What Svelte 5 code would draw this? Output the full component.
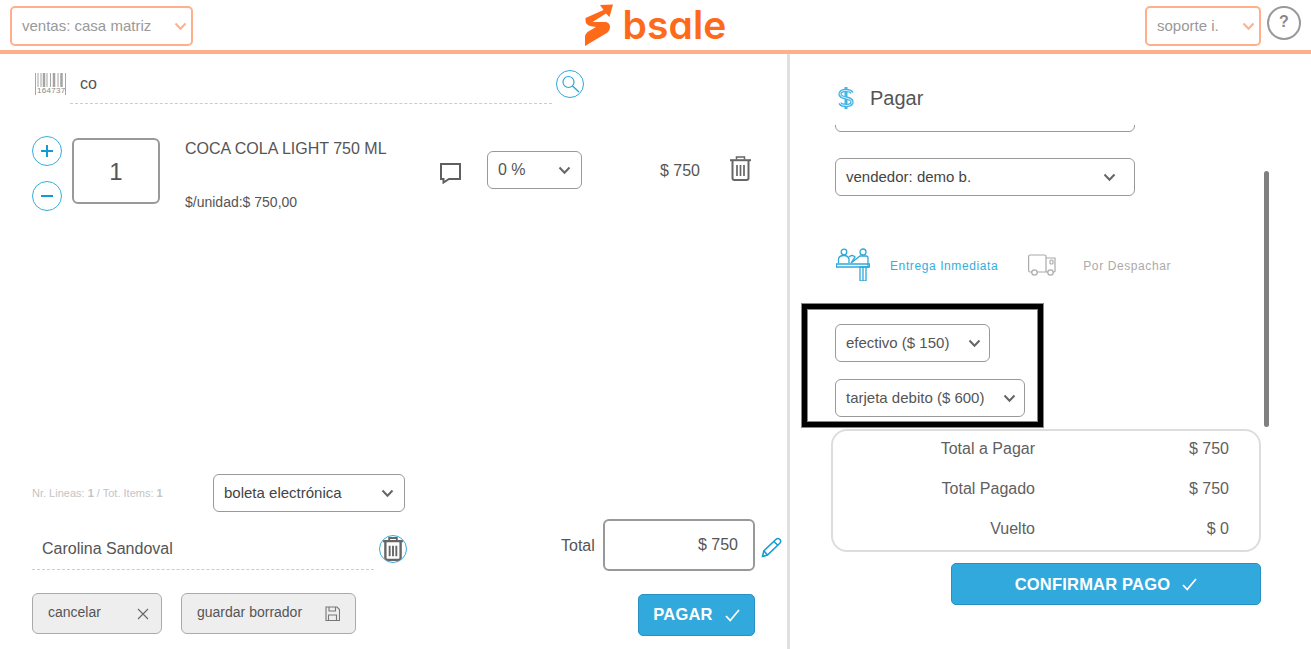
<script>
  const rows = [
    ['Total a Pagar', '$ 750'],
    ['Total Pagado', '$ 750'],
    ['Vuelto', '$ 0']
  ];
</script>

{#snippet chevron(color = '#666', w = 13)}
  <svg class="chev" width={w} height="9" viewBox="0 0 13 9"><path d="M1.500 1.500 6.500 6.800 11.500 1.500" fill="none" stroke={color} stroke-width="2"/></svg>
{/snippet}

{#snippet check()}
  <svg class="check" width="15" height="13" viewBox="0 0 15 13"><path d="M1 7 5.200 11.500 14 1" fill="none" stroke="#fff" stroke-width="1.800"/></svg>
{/snippet}

<div class="page">
  <header>
    <div class="head-left">
      <div class="top-select wide"><span>ventas: casa matriz</span>{@render chevron('#ffb08a')}</div>
    </div>
    <div class="logo">
      <svg width="28" height="42" viewBox="0 0 28 42">
        <path fill="#ff6a1a" d="M.5 14 18.500 6 15 1 28 .5 24.500 13 21 9.500 7.500 18 21 18Q25 19 25 23Q25 27.500 20 30L0 42V33Q0 29 5 26.500L11 23 5 22Q.3 20.500 .5 16Z"/>
      </svg>
      <span class="wordmark">bsale</span>
    </div>
    <div class="head-right">
      <div class="top-select narrow"><span>soporte i.</span>{@render chevron('#ffb08a')}</div>
      <div class="help">?</div>
    </div>
  </header>

  <main>
    <section class="left">
      <div class="search">
        <div class="barcode">
          <svg width="31" height="22" viewBox="0 0 31 22" fill="none" stroke="#a5a5a5">
            <path stroke-width="1" d="M.5 0V22M30.500 0V22"/>
            <path stroke-width="1" d="M3 0V14M6 0V14M12 0V14M15.500 0V14M23 0V14"/>
            <path stroke-width="2.500" d="M9 0V14M19 0V14M26.500 0V14"/>
          </svg>
          <span>164737</span>
        </div>
        <div class="search-field"><span>co</span></div>
        <div class="search-btn">
          <svg width="28" height="28" viewBox="0 0 28 28" fill="none" stroke="#2ea8d8">
            <circle cx="14" cy="14" r="13.500"/>
            <circle cx="12.500" cy="12" r="5.500" stroke-width="1.200"/>
            <path d="M16.500 16 23 22" stroke-width="1.500"/>
          </svg>
        </div>
      </div>

      <div class="item">
        <div class="steppers">
          <div class="round"><svg width="12" height="12" viewBox="0 0 12 12"><path d="M6 0V12M0 6H12" stroke="#129bd2" stroke-width="2"/></svg></div>
          <div class="round"><svg width="12" height="12" viewBox="0 0 12 12"><path d="M0 6H12" stroke="#129bd2" stroke-width="2"/></svg></div>
        </div>
        <div class="qty">1</div>
        <div class="product">
          <div class="name">COCA COLA LIGHT 750 ML</div>
          <div class="unit">$/unidad:$ 750,00</div>
        </div>
        <svg class="comment" width="21" height="21" viewBox="0 0 21 21"><path d="M1 1H20V16H9L3.500 19.500V16H1Z" fill="none" stroke="#5f5f5f" stroke-width="2"/></svg>
        <div class="select discount"><span>0 %</span>{@render chevron()}</div>
        <div class="line-total">$ 750</div>
        <div class="line-trash">
          <svg width="21" height="25" viewBox="0 0 21 25" fill="none" stroke="#666">
            <path d="M6.500 3.500V1h8v2.500" stroke-width="1.500"/>
            <path d="M0 4.200H21" stroke-width="2"/>
            <path d="M2.500 5V22a2 2 0 0 0 2 2h12a2 2 0 0 0 2-2V5" stroke-width="2"/>
            <path d="M7 9V20M10.500 9V20M14 9V20" stroke-width="1.700"/>
          </svg>
        </div>
      </div>

      <div class="bottom">
        <div class="doc-row">
          <div class="counts">Nr. Lineas: <b>1</b> / Tot. Items: <b>1</b></div>
          <div class="select doc"><span>boleta electrónica</span>{@render chevron()}</div>
        </div>
        <div class="client-row">
          <div class="client"><span>Carolina Sandoval</span></div>
          <div class="client-trash">
            <svg width="20" height="24" viewBox="0 0 21 25" fill="none" stroke="#666">
              <path d="M6.500 3.500V1h8v2.500" stroke-width="2"/>
              <path d="M0 4.200H21" stroke-width="2.500"/>
              <path d="M2.500 5V22a2 2 0 0 0 2 2h12a2 2 0 0 0 2-2V5" stroke-width="2.500"/>
              <path d="M7 9V20M10.500 9V20M14 9V20" stroke-width="2"/>
            </svg>
          </div>
          <div class="total-label">Total</div>
          <div class="total-box">$ 750</div>
          <svg class="pencil" width="21" height="21" viewBox="0 0 21 21" fill="none" stroke="#129bd2" stroke-width="1.500">
            <path d="M1.500 19.500 2.800 14 15 2.300Q17 .8 19 2.500 20.500 4.500 18.800 6.300L6.500 18Z"/>
            <path d="M13 4.500 17 8.500M3 14 6.500 18"/>
          </svg>
        </div>
        <div class="action-row">
          <div class="gray-btn cancel">
            <span>cancelar</span>
            <svg width="12" height="12" viewBox="0 0 12 12"><path d="M1 1 11 11M11 1 1 11" stroke="#666" stroke-width="1.100"/></svg>
          </div>
          <div class="gray-btn draft">
            <span>guardar borrador</span>
            <svg width="15" height="15" viewBox="0 0 15 15" fill="none" stroke="#777" stroke-width="1.100"><path d="M1 1H12L14.500 3.500V14.500H1Z"/><path d="M4 1V5H10.500V1M3.500 14.500V9H11.500V14.500"/></svg>
          </div>
          <div class="blue-btn pay"><span>PAGAR</span>{@render check()}</div>
        </div>
      </div>
    </section>

    <section class="right">
      <div class="pay-title">
        <svg width="16" height="22" viewBox="0 0 16 22" fill="none">
          <path d="M8 0V22" stroke="#45b5e3" stroke-width="3"/>
          <path d="M14 6Q13 3.500 8 3.500 2 3.500 2 7 2 10 8 11 14 12 14 15 14 18.500 8 18.500 3 18.500 2 16" stroke="#45b5e3" stroke-width="3.400"/>
          <path d="M14 6Q13 3.500 8 3.500 2 3.500 2 7 2 10 8 11 14 12 14 15 14 18.500 8 18.500 3 18.500 2 16" stroke="#d5f0fb" stroke-width="1"/>
        </svg>
        <span>Pagar</span>
      </div>

      <div class="scroller">
        <div class="select full clipped"></div>
        <div class="select full seller"><span>vendedor: demo b.</span>{@render chevron()}</div>
        <div class="delivery">
          <svg class="desk" width="34" height="33" viewBox="0 0 34 33" fill="none" stroke="#2ea8d8" stroke-width="1.300">
            <circle cx="8" cy="4" r="2.800"/>
            <path d="M2.500 15V11Q3 7.500 8 7.500 12 7.500 13 11V15"/>
            <circle cx="27" cy="4" r="3"/>
            <path d="M13 9Q16 6 19 9L15 15M15 15 24 8H30Q32 8 32 10V19H24V33H30V19"/>
            <path d="M.5 16H33.500V19H.5Z"/>
            <path d="M27 19V33"/>
          </svg>
          <span class="opt active">Entrega Inmediata</span>
          <svg class="truck" width="28" height="22" viewBox="0 0 28 22" fill="none" stroke="#aaa" stroke-width="1.200">
            <path d="M4 18H2Q.6 18 .6 16.500V2.500Q.6 1 2 1H16.500Q18 1 18 2.500V18H9"/>
            <path d="M18 4H27V17.500Q27 18 26 18H25M20 18H18"/>
            <circle cx="6.500" cy="18.500" r="2.700"/>
            <circle cx="22.500" cy="18.500" r="2.700"/>
            <rect x="22" y="6" width="3" height="4" rx="1"/>
          </svg>
          <span class="opt">Por Despachar</span>
        </div>
        <div class="select method cash"><span>efectivo ($ 150)</span>{@render chevron()}</div>
        <div class="select method card"><span>tarjeta debito ($ 600)</span>{@render chevron()}</div>
      </div>

      <div class="summary">
        {#each rows as [label, value]}
          <div class="sum-row"><span class="sum-label">{label}</span><span class="sum-value">{value}</span></div>
        {/each}
      </div>
      <div class="confirm-row">
        <div class="blue-btn confirm"><span>CONFIRMAR PAGO</span>{@render check()}</div>
      </div>

      <div class="thumb"></div>
      <div class="annotation"></div>
    </section>
  </main>
</div>

<style>
  :global(body) { margin: 0; background: #fff; }
  .page {
    width: 1311px; height: 649px; overflow: hidden;
    font-family: "Liberation Sans", Arial, sans-serif; color: #555; font-size: 16px;
  }
  header {
    box-sizing: border-box; height: 54px; border-bottom: 4px solid #ffb08a;
    display: grid; grid-template-columns: 1fr auto 1fr; align-items: start;
  }
  .head-left { padding: 6px 0 0 10px; }
  .head-right { padding: 6px 10px 0 0; display: flex; justify-content: flex-end; gap: 6px; }
  .top-select {
    box-sizing: border-box; height: 40px; border: 2px solid #ffb08a; border-radius: 5px;
    display: flex; align-items: center; justify-content: space-between;
    color: #999; font-size: 15px; padding: 0 4px 0 10px;
  }
  .top-select span { margin-top: -1px; }
  .wide { width: 183px; }
  .narrow { width: 116px; }
  .help {
    box-sizing: border-box; width: 34px; height: 34px; border: 2px solid #999; border-radius: 50%;
    color: #888; font-weight: 700; font-size: 16px; text-align: center; line-height: 28px;
  }
  .logo { display: flex; align-items: flex-start; padding-top: 4px; height: 46px; }
  .logo svg { flex: none; }
  .wordmark {
    font-family: Inter, sans-serif; font-feature-settings: "cv11"; font-weight: 600; font-size: 39px;
    line-height: 42px; color: #ff6a1a; margin-left: 10px; letter-spacing: 0.1px;
  }
  main { display: grid; grid-template-columns: 787px 524px; height: 595px; }
  .left { display: flex; flex-direction: column; height: 595px; }
  .search { display: flex; align-items: flex-start; margin: 16px 0 0 35px; }
  .barcode { width: 31px; height: 22px; margin-top: 3px; position: relative; color: #888; overflow: hidden; }
  .barcode svg { display: block; }
  .barcode span {
    position: absolute; left: 2px; top: 14px; width: 27px; background: #fff;
    font-size: 8px; line-height: 8px; letter-spacing: .3px; text-align: center;
  }
  .search-field {
    box-sizing: border-box; width: 482px; height: 34px; margin-left: 4px; padding: 5px 0 0 10px;
    border-bottom: 1px dashed #ccc; line-height: 18px;
  }
  .search-btn { margin-left: 4px; height: 28px; }
  .item { display: flex; align-items: flex-start; margin: 32px 0 0 32px; }
  .steppers { display: flex; flex-direction: column; gap: 15px; }
  .round {
    box-sizing: border-box; width: 30px; height: 30px; border: 1px solid #34aedc; border-radius: 50%;
    display: flex; align-items: center; justify-content: center;
  }
  .qty {
    box-sizing: border-box; width: 88px; height: 66px; margin: 2px 0 0 10px; border: 2px solid #999; border-radius: 6px;
    font-size: 24px; display: flex; align-items: center; justify-content: center; padding-top: 1px;
  }
  .product { width: 241px; margin-left: 25px; }
  .name { font-size: 16px; line-height: 18px; margin-top: 4px; }
  .unit { font-size: 14px; line-height: 16px; margin-top: 36px; }
  .comment { margin: 27px 0 0 14px; }
  .select {
    box-sizing: border-box; height: 38px; border: 1px solid #999; border-radius: 6px;
    display: flex; align-items: center; justify-content: space-between; padding: 0 10px; font-size: 15px;
  }
  .select span { margin-top: -1px; }
  .discount { width: 95px; margin: 15px 0 0 26px; font-size: 16px; padding-right: 10px; }
  .line-total { width: 118px; margin-top: 26px; text-align: right; line-height: 18px; }
  .line-trash { margin: 20px 0 0 30px; }
  .bottom { margin-top: auto; padding: 0 0 13px 32px; }
  .doc-row { display: flex; align-items: center; }
  .counts { width: 181px; font-size: 11px; color: #c4c4c4; }
  .doc { width: 192px; color: #444; }
  .client-row { display: flex; align-items: flex-start; margin-top: 7px; height: 52px; }
  .client {
    box-sizing: border-box; width: 342px; height: 51px; padding: 21px 0 0 10px; line-height: 18px;
    border-bottom: 1px dashed #ccc;
  }
  .client-trash {
    box-sizing: border-box; width: 28px; height: 28px; margin: 16px 0 0 5px; border-radius: 50%;
    border: 1px solid #34aedc; display: flex; align-items: center; justify-content: center; overflow: hidden;
  }
  .total-label { margin: 18px 0 0 154px; line-height: 18px; width: 42px; }
  .total-box {
    box-sizing: border-box; width: 152px; height: 52px; border: 2px solid #999; border-radius: 6px;
    text-align: right; padding: 15px 15px 0 0; line-height: 18px;
  }
  .pencil { margin: 18px 0 0 6px; }
  .action-row { display: flex; align-items: flex-start; margin-top: 22px; }
  .gray-btn {
    box-sizing: border-box; height: 41px; background: #eee; border: 1px solid #aaa; border-radius: 6px;
    display: flex; align-items: center; justify-content: space-between; font-size: 14px;
    padding: 0 12px 0 15px;
  }
  .gray-btn span { margin-top: -3px; }
  .cancel { width: 130px; }
  .draft { width: 175px; margin-left: 19px; padding-right: 15px; }
  .blue-btn {
    box-sizing: border-box; background: #31a9dc; border: 1px solid #2a90c4; border-radius: 5px; color: #fff;
    font-weight: 700; font-size: 16.500px; letter-spacing: .2px;
    display: flex; align-items: center; justify-content: center; gap: 12px;
  }
  .check { display: block; }
  .pay { width: 117px; height: 42px; margin: 1px 0 0 282px; }
  .pay span { margin-top: -2px; }
  .right { border-left: 3px solid #e0e0e0; position: relative; padding-left: 45px; box-sizing: border-box; }
  .pay-title { display: flex; align-items: center; height: 22px; margin: 33px 0 0 6px; font-size: 20px; }
  .pay-title span { margin-left: 16px; }
  .pay-title svg { margin-left: -3px; }
  .scroller { height: 297px; margin-top: 16px; overflow: hidden; }
  .full { width: 300px; }
  .clipped { margin-top: -31px; }
  .seller { margin-top: 26px; color: #444; padding-right: 18px; }
  .delivery { display: flex; align-items: center; height: 33px; margin-top: 52px; margin-left: 1px; }
  .desk { flex: none; }
  .opt { font-size: 12px; letter-spacing: .6px; color: #aaa; margin-left: 27px; padding-top: 2px; }
  .opt.active { color: #34aedc; margin-left: 20px; }
  .truck { margin-left: 30px; flex: none; }
  .method { padding-right: 8px; }
  .cash { margin-top: 43px; width: 155px; }
  .card { margin-top: 17px; width: 190px; }
  .summary {
    box-sizing: border-box; width: 430px; height: 123px; margin: 7px 0 0 -4px; border: 2px solid #ddd; border-radius: 16px;
    padding-top: 9px;
  }
  .sum-row { display: flex; height: 40px; line-height: 18px; color: #5f5f5f; }
  .sum-label { width: 202px; text-align: right; }
  .sum-value { width: 194px; text-align: right; }
  .confirm-row { display: flex; justify-content: flex-end; width: 426px; margin-top: 11px; }
  .confirm { width: 310px; height: 42px; }
  .thumb { position: absolute; left: 474px; top: 117px; width: 5px; height: 256px; border-radius: 3px; background: #808080; }
  .annotation {
    position: absolute; left: 12px; top: 250px; width: 241px; height: 123px; box-sizing: border-box;
    border: 5px solid #000; box-shadow: inset 0 0 0 1px #888, 0 0 0 1px #888; pointer-events: none;
  }
</style>
